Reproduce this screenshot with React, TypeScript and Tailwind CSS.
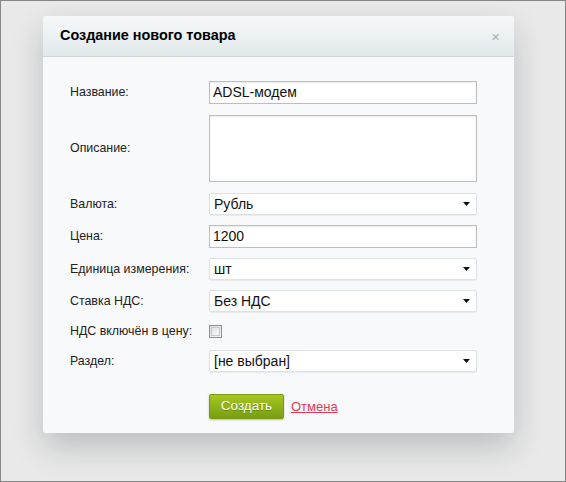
import React from 'react';

const labelCls = 'w-[139px] shrink-0 text-[12.4px] text-[#222]';

function Arrow() {
  return (
    <svg width="7" height="4" viewBox="0 0 7 4" className="shrink-0">
      <path d="M0 0h7L3.5 4z" fill="#111" />
    </svg>
  );
}

function Select({ value }: { value: string }) {
  return (
    <div className="flex h-[22px] w-[268px] items-center justify-between rounded-[2px] border border-[#dde1e4] bg-white pl-[4px] pr-[6px] text-[14px] text-[#111] shadow-[0_1px_1px_rgba(0,0,0,0.06)]">
      <span>{value}</span>
      <Arrow />
    </div>
  );
}

function Input({ value }: { value: string }) {
  return (
    <div className="flex h-[23px] w-[268px] items-center border border-[#bdbdbd] bg-white pl-[3px] text-[14px] text-[#111] shadow-[inset_0_1px_2px_rgba(0,0,0,0.08)]">
      {value}
    </div>
  );
}

export default function App() {
  return (
    <div
      className="h-[482px] w-[566px] border border-[#868686] bg-[#e9e9e9] pl-[42px] pt-[15px]"
      style={{ fontFamily: '"Liberation Sans", Arial, sans-serif' }}
    >
      <div className="w-[471px] overflow-hidden rounded-[3px] bg-[#f8f9fb] shadow-[0_14px_32px_rgba(0,25,35,0.2)]">
        {/* header */}
        <div className="flex h-[41px] items-center justify-between border-b border-[#cdd5d8] bg-gradient-to-b from-[#f6f8f9] to-[#e2e9eb] pl-[17px] pr-[14px]">
          <h2 className="text-[14.4px] font-bold text-[#000]">Создание нового товара</h2>
          <span className="text-[15px] leading-none text-[#a9adb0]">×</span>
        </div>

        {/* body */}
        <div className="pb-[14px] pl-[27px] pt-[24px]">
          <div className="flex items-center">
            <span className={labelCls}>Название:</span>
            <Input value="ADSL-модем" />
          </div>
          <div className="mt-[11px] flex items-center">
            <span className={labelCls}>Описание:</span>
            <div className="h-[67px] w-[268px] border border-[#bdbdbd] bg-white shadow-[inset_0_1px_2px_rgba(0,0,0,0.08)]" />
          </div>
          <div className="mt-[11px] flex items-center">
            <span className={labelCls}>Валюта:</span>
            <Select value="Рубль" />
          </div>
          <div className="mt-[10px] flex items-center">
            <span className={labelCls}>Цена:</span>
            <Input value="1200" />
          </div>
          <div className="mt-[10px] flex items-center">
            <span className={labelCls}>Единица измерения:</span>
            <Select value="шт" />
          </div>
          <div className="mt-[10px] flex items-center">
            <span className={labelCls}>Ставка НДС:</span>
            <Select value="Без НДС" />
          </div>
          <div className="mt-[8px] flex h-[22px] items-center">
            <span className={labelCls}>НДС включён в цену:</span>
            <div className="h-[13px] w-[13px] border border-[#8f8f8f] bg-gradient-to-br from-[#dcdcdc] to-[#f6f6f6] p-[1px]">
              <div className="h-full w-full border border-[#c8c8c8] bg-gradient-to-br from-[#e2e2e2] to-[#fafafa]" />
            </div>
          </div>
          <div className="mt-[8px] flex items-center">
            <span className={labelCls}>Раздел:</span>
            <Select value="[не выбран]" />
          </div>

          <div className="mt-[22px] flex items-center pl-[139px]">
            <button className="h-[25px] w-[75px] rounded-[2px] border border-[#7a9a14] bg-gradient-to-b from-[#a6c61e] to-[#789e12] text-[13.5px] text-white shadow-[0_1px_2px_rgba(0,0,0,0.25)] [text-shadow:0_1px_0_rgba(0,0,0,0.25)]">
              Создать
            </button>
            <a className="ml-[7px] text-[13px] text-[#e23a56] underline">Отмена</a>
          </div>
        </div>
      </div>
    </div>
  );
}
